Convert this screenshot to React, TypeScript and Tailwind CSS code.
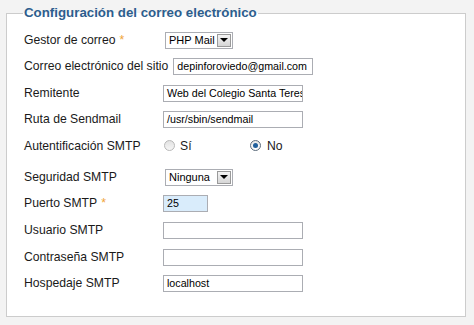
import React from 'react'

const font = { fontFamily: '"Liberation Sans", Arial, sans-serif' }

function Req() {
    return <span className="ml-1 text-[#f0a53a]">*</span>
}

function TextBox({ value = '', w = 'w-[140px]', blue = false }: { value?: string; w?: string; blue?: boolean }) {
    return (
        <div
            className={`${w} h-[17px] border border-[#abadb3] ${blue ? 'bg-[#d9ecfb]' : 'bg-white'} flex items-center pl-[3px] overflow-hidden whitespace-nowrap text-[10.7px] text-black`}
        >
            {value}
        </div>
    )
}

function Select({ value, w }: { value: string; w: string }) {
    return (
        <div className={`${w} h-[17px] ml-[2px] border border-[#abadb3] bg-white flex items-center justify-between pl-[3px] pr-[1px] text-[11px] text-black`}>
            <span>{value}</span>
            <span className="w-[14px] h-[13px] border border-[#9a9a9a] bg-gradient-to-b from-[#f4f4f4] to-[#d6d6d6] flex items-center justify-center">
                <span className="w-0 h-0 border-l-[4px] border-r-[4px] border-t-[4px] border-l-transparent border-r-transparent border-t-black" />
            </span>
        </div>
    )
}

function Radio({ checked }: { checked?: boolean }) {
    return (
        <span
            className={`w-[11px] h-[11px] rounded-full border flex items-center justify-center ${
                checked ? 'border-[#5b6b7b] bg-gradient-to-b from-[#e6e6e6] to-[#ffffff]' : 'border-[#b8b8b8] bg-gradient-to-b from-[#e2e2e2] to-[#f6f6f6]'
            }`}
        >
            {checked && <span className="w-[5px] h-[5px] rounded-full bg-[#1f5f9c]" />}
        </span>
    )
}

function Row({ label, h, children, className = '' }: { label: React.ReactNode; h: string; children: React.ReactNode; className?: string }) {
    return (
        <div className={`flex items-center ${h} ${className}`}>
            <div className="min-w-[139px] pr-[5px] shrink-0 whitespace-nowrap text-[12.2px] text-[#1a1a1a]">{label}</div>
            <div className="flex items-center">{children}</div>
        </div>
    )
}

export default function App() {
    return (
        <div className="w-[474px] h-[325px] bg-[#f3f3f3] pt-[4px] overflow-hidden" style={font}>
            <fieldset className="ml-[6px] w-[460px] h-[313px] border border-[#cccccc] bg-white pl-[17px]">
                <legend className="ml-[-1px] px-[1px] text-[13.3px] leading-[18px] font-bold text-[#2d5e8e]">
                    Configuración del correo electrónico
                </legend>

                <div className="pt-[5px]">
                    <Row h="h-[26px]" label={<>Gestor de correo<Req /></>}>
                        <Select value="PHP Mail" w="w-[68px]" />
                    </Row>
                    <Row h="h-[27px]" label="Correo electrónico del sitio">
                        <TextBox value="depinforoviedo@gmail.com" />
                    </Row>
                    <Row h="h-[26px]" label="Remitente">
                        <TextBox value="Web del Colegio Santa Teres" />
                    </Row>
                    <Row h="h-[27px]" label="Ruta de Sendmail">
                        <TextBox value="/usr/sbin/sendmail" />
                    </Row>
                    <Row h="h-[26px]" label="Autentificación SMTP">
                        <div className="flex items-center text-[12.2px] text-[#1a1a1a]">
                            <span className="ml-[1px]"><Radio /></span>
                            <span className="ml-[5px] w-[70px]">Sí</span>
                            <Radio checked />
                            <span className="ml-[6px]">No</span>
                        </div>
                    </Row>
                    <Row h="h-[26px]" className="mt-[5px]" label="Seguridad SMTP">
                        <Select value="Ninguna" w="w-[68px]" />
                    </Row>
                    <Row h="h-[27px]" label={<>Puerto SMTP<Req /></>}>
                        <TextBox value="25" w="w-[45px]" blue />
                    </Row>
                    <Row h="h-[27px]" label="Usuario SMTP">
                        <TextBox />
                    </Row>
                    <Row h="h-[26px]" label="Contraseña SMTP">
                        <TextBox />
                    </Row>
                    <Row h="h-[27px]" label="Hospedaje SMTP">
                        <TextBox value="localhost" />
                    </Row>
                </div>
            </fieldset>
        </div>
    )
}
